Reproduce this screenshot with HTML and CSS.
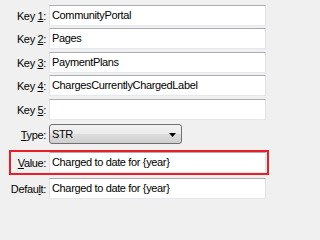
FILE: index.html
```html
<!DOCTYPE html>
<html>
<head>
<meta charset="utf-8">
<link rel="stylesheet" href="styles.css">
</head>
<body>
<div class="form">
  <div class="row"><label class="lbl">Key <u>1</u>:</label><div class="field">CommunityPortal</div></div>
  <div class="row g2"><label class="lbl">Key <u>2</u>:</label><div class="field">Pages</div></div>
  <div class="row g3"><label class="lbl">Key <u>3</u>:</label><div class="field">PaymentPlans</div></div>
  <div class="row g2"><label class="lbl">Key <u>4</u>:</label><div class="field">ChargesCurrentlyChargedLabel</div></div>
  <div class="row g3"><label class="lbl">Key <u>5</u>:</label><div class="field"></div></div>
  <div class="row g3 selrow"><label class="lbl"><u>T</u>ype:</label>
    <div class="select"><span>STR</span>
      <svg class="arrow" width="7" height="4" viewBox="0 0 7 4"><path d="M0 0H7L3.5 4Z" fill="#000"/></svg>
    </div>
  </div>
  <div class="row hl"><label class="lbl"><u>V</u>alue:</label><div class="field">Charged to date for {year}</div></div>
  <div class="row g3"><label class="lbl">Defau<u>l</u>t:</label><div class="field">Charged to date for {year}</div></div>
</div>
</body>
</html>
```
FILE: styles.css
```css
html, body {
  margin: 0;
  padding: 0;
  background: #f0f0f0;
  width: 270px;
  height: 201px;
  overflow: hidden;
}
body {
  font-family: "Liberation Sans", Arial, sans-serif;
  font-size: 11px;
  letter-spacing: -0.35px;
  color: #000;
}
.form {
  display: flex;
  flex-direction: column;
  padding-top: 5px;
}
.row {
  display: flex;
  align-items: center;
  height: 21px;
}
.g2 { margin-top: 2px; }
.g3 { margin-top: 3px; }
.lbl {
  width: 46px;
  text-align: right;
  white-space: nowrap;
  margin-right: 3px;
  padding-top: 1px;
}
.field {
  box-sizing: border-box;
  width: 217px;
  height: 21px;
  background: #fff;
  border: 1px solid #e2e3ea;
  border-top-color: #abadb3;
  border-bottom-color: #e3e9ef;
  padding: 0 2px;
  line-height: 19px;
  white-space: nowrap;
  overflow: hidden;
}
.selrow {
  height: 20px;
  margin-top: 4px;
}
.select {
  box-sizing: border-box;
  width: 133px;
  height: 20px;
  border: 1px solid #707070;
  border-radius: 3px;
  background: linear-gradient(#f2f2f2 0%, #ebebeb 50%, #dddddd 51%, #cfcfcf 100%);
  display: flex;
  align-items: center;
  justify-content: space-between;
  padding: 0 4px 0 2px;
  line-height: 18px;
}
.arrow { display: block; margin-right: 1px; margin-top: 1px; }
.hl {
  box-sizing: border-box;
  margin-top: 6px;
  margin-left: 9px;
  width: 260px;
  height: 25px;
  border: 2px solid #ee1c24;
}
.hl .lbl { width: 35px; }
```
